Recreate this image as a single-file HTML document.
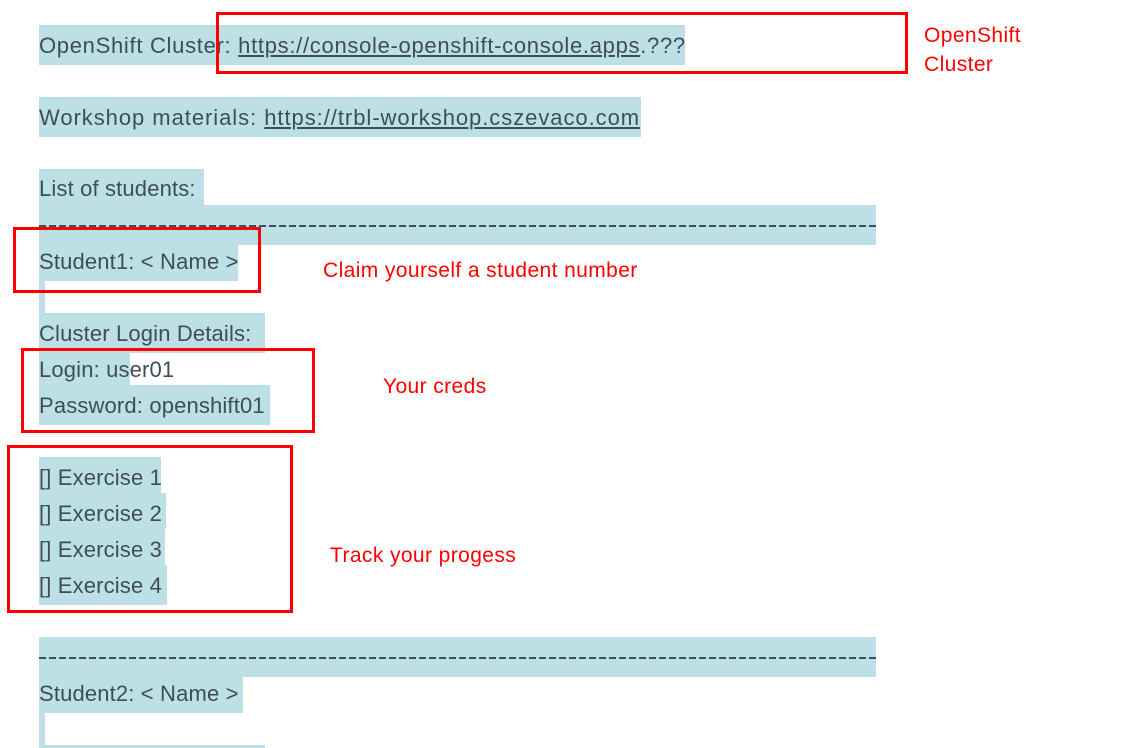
<!DOCTYPE html>
<html><head><meta charset="utf-8"><style>
body{margin:0;width:1143px;height:748px;background:#fff;position:relative;overflow:hidden;font-family:"Liberation Sans",sans-serif}
.h{position:absolute;background:#bce0e5}
.t{position:absolute;left:39px;color:#3e4d5a;font-size:22px;letter-spacing:0.15px;white-space:nowrap;line-height:24px}
.t a{color:#3e4d5a;text-decoration:underline}
.r{position:absolute;border:3px solid #f00;box-sizing:border-box}
.l{position:absolute;color:#f00;font-size:21px;letter-spacing:0.4px;white-space:nowrap;line-height:29px}
.d{position:absolute;left:39px;width:837px;height:2px;background:repeating-linear-gradient(90deg,#3e4d5a 0 7px,transparent 7px 10px)}
</style></head><body>
<div class="h" style="left:39px;top:25px;width:646px;height:40px"></div>
<div class="h" style="left:39px;top:97px;width:602px;height:40px"></div>
<div class="h" style="left:39px;top:169px;width:165px;height:36px"></div>
<div class="h" style="left:39px;top:205px;width:837px;height:40px"></div>
<div class="h" style="left:39px;top:245px;width:199px;height:36px"></div>
<div class="h" style="left:39px;top:281px;width:6px;height:32px"></div>
<div class="h" style="left:39px;top:313px;width:226px;height:40px"></div>
<div class="h" style="left:39px;top:353px;width:91px;height:32px"></div>
<div class="h" style="left:39px;top:385px;width:231px;height:40px"></div>
<div class="h" style="left:39px;top:457px;width:122px;height:36px"></div>
<div class="h" style="left:39px;top:493px;width:127px;height:36px"></div>
<div class="h" style="left:39px;top:529px;width:126px;height:36px"></div>
<div class="h" style="left:39px;top:565px;width:128px;height:40px"></div>
<div class="h" style="left:39px;top:637px;width:837px;height:40px"></div>
<div class="h" style="left:39px;top:677px;width:204px;height:36px"></div>
<div class="h" style="left:39px;top:713px;width:6px;height:35px"></div>
<div class="h" style="left:39px;top:745px;width:226px;height:3px"></div>

<div class="t" style="top:34px;letter-spacing:0.7px">OpenShift Cluster: <a>https://console-openshift-console.apps</a>.???</div>
<div class="t" style="top:106px;letter-spacing:0.95px">Workshop materials: <a>https://trbl-workshop.cszevaco.com</a></div>
<div class="t" style="top:177px">List of students:</div>
<div class="d" style="top:225px"></div>
<div class="t" style="top:250px">Student1: &lt; Name &gt;</div>
<div class="t" style="top:322px">Cluster Login Details:</div>
<div class="t" style="top:358px">Login: user01</div>
<div class="t" style="top:394px">Password: openshift01</div>
<div class="t" style="top:466px">[] Exercise 1</div>
<div class="t" style="top:502px">[] Exercise 2</div>
<div class="t" style="top:538px">[] Exercise 3</div>
<div class="t" style="top:574px">[] Exercise 4</div>
<div class="d" style="top:657px"></div>
<div class="t" style="top:682px">Student2: &lt; Name &gt;</div>

<div class="r" style="left:216px;top:12px;width:692px;height:62px"></div>
<div class="r" style="left:13px;top:227px;width:248px;height:66px"></div>
<div class="r" style="left:21px;top:348px;width:294px;height:85px"></div>
<div class="r" style="left:7px;top:445px;width:286px;height:168px"></div>

<div class="l" style="left:924px;top:21px">OpenShift</div>
<div class="l" style="left:924px;top:50px">Cluster</div>
<div class="l" style="left:323px;top:256px">Claim yourself a student number</div>
<div class="l" style="left:383px;top:372px">Your creds</div>
<div class="l" style="left:330px;top:541px">Track your progess</div>
</body></html>
